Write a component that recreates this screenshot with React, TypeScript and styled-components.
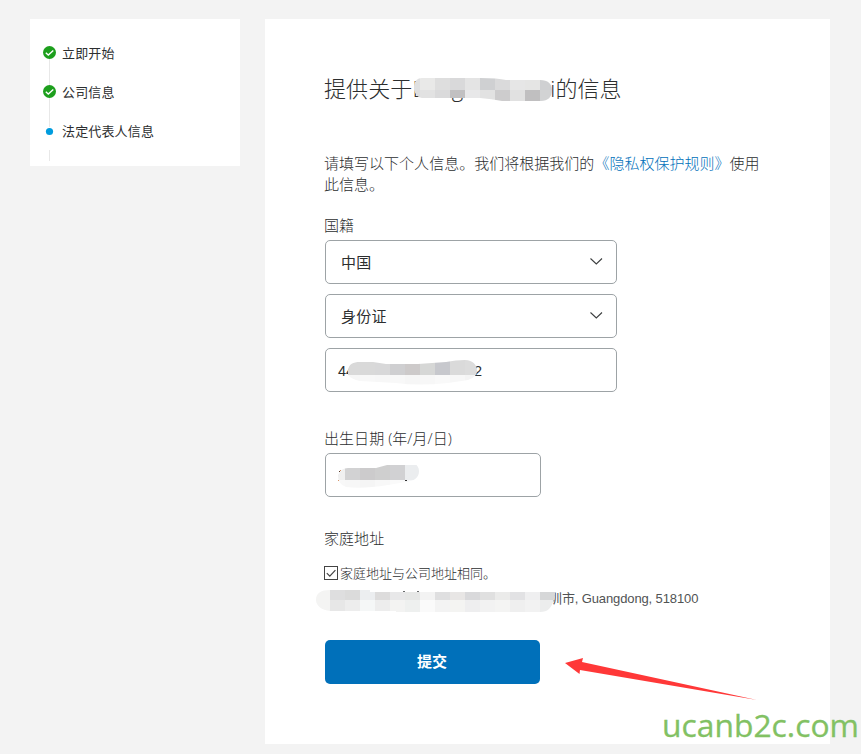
import React from "react";
import styled, { createGlobalStyle } from "styled-components";

const GlobalStyle = createGlobalStyle`
  * { box-sizing: border-box; }
  html, body { margin: 0; padding: 0; }
  body {
    background: #f3f3f3;
    color: #2c2e2f;
    font-family: "Liberation Sans", "Noto Sans CJK SC", sans-serif;
    overflow: hidden;
  }
`;

const Page = styled.div`
  position: relative;
  width: 861px;
  height: 754px;
  padding: 19px 31px 10px 30px;
  display: flex;
  align-items: flex-start;
  gap: 25px;
`;

const Sidebar = styled.nav`
  width: 210px;
  height: 147px;
  flex: none;
  background: #fff;
  padding: 14px 12px 0;
`;

const Step = styled.div`
  display: flex;
  height: 39px;
  gap: 5px;
  font-size: 13px;
  line-height: 41px;
  letter-spacing: 0.15px;
  white-space: nowrap;
`;

const Rail = styled.div`
  width: 15px;
  height: 39px;
  flex: none;
  svg { display: block; overflow: visible; }
`;

const Panel = styled.main`
  width: 565px;
  height: 725px;
  flex: none;
  background: #fff;
  padding: 56px 60px 0;
  display: flex;
  flex-direction: column;
  align-items: flex-start;
`;

const Title = styled.h1`
  margin: 0 0 0 -1px;
  height: 30px;
  display: flex;
  font-family: "Open Sans", "Noto Sans CJK SC", sans-serif;
  font-size: 22px;
  line-height: 27px;
  font-weight: 300;
  letter-spacing: 0.1px;
  white-space: nowrap;
`;

const Hidden = styled.span<{ $w: number }>`
  position: relative;
  display: inline-flex;
  flex: none;
  width: ${(p) => p.$w}px;
`;

const NameTail = styled.span<{ $gap: number }>`
  margin-left: ${(p) => p.$gap}px;
`;

const Smudge = styled.svg<{ $x: number; $y: number }>`
  position: absolute;
  left: ${(p) => p.$x}px;
  top: ${(p) => p.$y}px;
  display: block;
`;

const Intro = styled.p`
  margin: 48px 0 0 -1px;
  width: 445px;
  font-size: 15px;
  line-height: 21px;
  font-weight: 300;
  letter-spacing: 0.02px;
  a { color: #0070ba; text-decoration: none; }
`;

const Label = styled.div<{ $top: number }>`
  margin: ${(p) => p.$top}px 0 0 -1px;
  height: 20px;
  font-family: "Open Sans", "Noto Sans CJK SC", sans-serif;
  font-size: 15px;
  line-height: 18px;
  font-weight: 300;
  letter-spacing: 0.05px;
  white-space: nowrap;
`;

const Field = styled.div<{ $top: number; $w?: number; $pad?: number }>`
  position: relative;
  display: flex;
  align-items: center;
  justify-content: space-between;
  margin-top: ${(p) => p.$top}px;
  width: ${(p) => p.$w ?? 292}px;
  height: 44px;
  padding: 0 13px 0 ${(p) => p.$pad ?? 15}px;
  border: 1px solid #9da3a6;
  border-radius: 5px;
  font-size: 15px;
  line-height: 20px;
  svg { flex: none; }
`;

const Value = styled.span`
  padding-top: 2px;
  letter-spacing: 0.2px;
`;

const Digits = styled.span`
  display: flex;
  width: 144px;
  padding-top: 1px;
  justify-content: space-between;
  font-size: 14.5px;
`;

const CheckRow = styled.label`
  display: flex;
  align-items: center;
  margin: 15px 0 0 -1px;
  height: 20px;
  gap: 2px;
  font-size: 13px;
  line-height: 20px;
  font-weight: 300;
  letter-spacing: 0;
  white-space: nowrap;
  svg { display: block; margin-top: -3px; }
`;

const Address = styled.div`
  display: flex;
  height: 20px;
  margin-top: 5px;
  font-size: 13px;
  line-height: 20px;
  letter-spacing: -0.12px;
  color: #515354;
  white-space: nowrap;
`;

const Submit = styled.button`
  margin: 31px 0 0;
  width: 215px;
  height: 44px;
  border: 0;
  border-radius: 5px;
  background: #0070ba;
  color: #fff;
  font: 700 15px/44px "Liberation Sans", "Noto Sans CJK SC", sans-serif;
  padding: 0 1px 0 0;
`;

const Arrow = styled.svg`
  position: absolute;
  left: 560px;
  top: 650px;
`;

const Watermark = styled.div`
  position: absolute;
  right: 2px;
  bottom: 7px;
  color: #82c163;
  font: 500 31.8px/44px "Open Sans", sans-serif;
  -webkit-text-stroke: 0.3px #82c163;
  white-space: nowrap;
`;

const Done = ({ length }: { length: number }) => (
  <svg width="15" height="39">
    <path d={`M7.5 26v${length}`} stroke="#e8e8e8" />
    <circle cx="7.5" cy="19.5" r="6.5" fill="#1d9f1d" />
    <path d="M3.800 19.800l2.500 2.300 5-4.600" fill="none" stroke="#fff" strokeWidth="1.4" />
  </svg>
);

const Current = () => (
  <svg width="15" height="39">
    <path d="M7.5 39v11" stroke="#e8e8e8" />
    <circle cx="7.5" cy="20.5" r="3.6" fill="#009cde" />
  </svg>
);

const Chevron = () => (
  <svg width="14" height="12" viewBox="0 0 14 12">
    <path d="M1.500 2.500L7.300 8l5.700-5.500" fill="none" stroke="#3c3e3f" strokeWidth="1.1" />
  </svg>
);

type MosaicProps = {
  id: string;
  x: number;
  y: number;
  w: number;
  h: number;
  offset: number;
  split: number;
  shape: string;
  rows: string[][];
  specks?: [number, number, number, number, string][];
};

/* Two rows of 15px tiles clipped to a brush-stroke outline. */
const Mosaic = ({ id, x, y, w, h, offset, split, shape, rows, specks = [] }: MosaicProps) => (
  <Smudge $x={x} $y={y} width={w} height={h}>
    <clipPath id={id}>
      <path d={shape} />
    </clipPath>
    <g clipPath={`url(#${id})`} shapeRendering="crispEdges">
      {rows.map((row, r) =>
        row.map((fill, c) => (
          <rect
            key={`${r}-${c}`}
            x={offset + c * 15}
            y={r === 0 ? split - 15 : split}
            width="15"
            height="15"
            fill={fill}
          />
        ))
      )}
    </g>
    {specks.map(([sx, sy, sw, sh, fill], i) => (
      <rect key={i} x={sx} y={sy} width={sw} height={sh} fill={fill} />
    ))}
  </Smudge>
);

export default function App() {
  return (
    <>
      <GlobalStyle />
      <Page>
        <Sidebar>
          <Step><Rail><Done length={26} /></Rail>立即开始</Step>
          <Step><Rail><Done length={29} /></Rail>公司信息</Step>
          <Step><Rail><Current /></Rail>法定代表人信息</Step>
        </Sidebar>
        <Panel>
          <Title>
            提供关于
            <Hidden $w={143}>
              L
              <NameTail $gap={28}>g</NameTail>
              <NameTail $gap={87}>i</NameTail>
              <Mosaic
                id="name" x={2} y={1} w={140} h={28} offset={-9} split={14}
                shape="M0 10Q1 2 8 2H66Q84 2 92 4H118Q122 4 126 4C134 4 138 8 138 14C138 21 134 25 127 25H88Q78 23 66 22H8Q2 21 0 14Z"
                rows={[
                  ["#dfe0e1", "#e9e9e8", "#dedede", "#d9d9da", "#e4e4e4", "#cfd0d2", "#dadadb", "#e6e6e6", "#e5e5e4", "#cfd0d2"],
                  ["#dddedf", "#e2e2e2", "#dadadb", "#c1c0c1", "#e8e8e9", "#e2e2e2", "#cdcccd", "#e1e1e1", "#c0bfc0", "#d2d3d4"],
                ]}
              />
            </Hidden>
            的信息
          </Title>
          <Intro>
            请填写以下个人信息。我们将根据我们的<a>《隐私权保护规则》</a>使用此信息。
          </Intro>
          <Label $top={21}>国籍</Label>
          <Field $top={4}><Value>中国</Value><Chevron /></Field>
          <Field $top={10}><Value>身份证</Value><Chevron /></Field>
          <Field $top={10} $pad={12}>
            <Digits><span>44</span><span>2</span></Digits>
            <Mosaic
              id="number" x={22} y={10} w={130} h={26} offset={-3} split={16}
              shape="M0 11C1 5 5 3 12 3H25L38 5H70L98 3Q108 1 117 1C125 1 129 6 129 12Q129 18 120 21L100 24Q70 27 48 24L12 22Q3 20 0 16Z"
              rows={[
                ["#d9d9d9", "#d9d9d9", "#d8d8d9", "#cfcfd1", "#cdcaca", "#d6d7d6", "#c7c8cd", "#dadada", "#dcdcdc"],
                ["#f6f6f6", "#f8f8f8", "#f7f7f7", "#f8f8f8", "#f6f6f6", "#f7f7f7", "#f9f9f9", "#f7f7f7", "#f4f4f4"],
              ]}
            />
          </Field>
          <Label $top={37}>出生日期 (年/月/日)</Label>
          <Field $top={4} $w={216} $pad={12}>
            <Mosaic
              id="birth" x={12} y={6} w={82} h={28} offset={-8} split={20}
              shape="M0 15Q3 8 10 8H38L60 2C72 -1 81 4 81 11C81 18 76 21 68 22L50 25Q25 29 8 27Q0 24 0 16Z"
              rows={[
                ["#f0f0f0", "#d2d2d3", "#cccbcc", "#cfcfcf", "#d1d1d3", "#ebedef"],
                ["#f8f8f8", "#f7f7f7", "#f5f5f5", "#f8f8f8", "#fafafa", "#f6f7f8"],
              ]}
              specks={[[1, 11, 1, 1, "#5a3a2a"], [2, 10, 1, 1, "#d9966a"], [0, 20, 1, 1, "#d9966a"], [67, 20, 2, 1, "#333"]]}
            />
          </Field>
          <Label $top={32}>家庭地址</Label>
          <CheckRow>
            <svg width="14" height="14">
              <rect x="0.5" y="0.5" width="13" height="13" fill="#fff" stroke="#444" />
              <path d="M2.800 7.200l3 3 5.600-6" fill="none" stroke="#444" strokeWidth="1.2" />
            </svg>
            家庭地址与公司地址相同。
          </CheckRow>
          <Address>
            <Hidden $w={224}>
              <Mosaic
                id="street" x={-9} y={-1} w={240} h={26} offset={-1} split={12}
                shape="M0 12C0 5 5 2 14 2H54V4H239Q239 10 237 14C235 20 232 24 224 24H80V23H14C6 22 0 18 0 12Z"
                rows={[
                  ["#f4f4f3", "#dededf", "#dbdbdb", "#eceef0", "#dddcdc", "#e8e8e9", "#e6e7e6", "#f3f3f3", "#dfdfe0", "#e8e6e5", "#d9d9db", "#e0e0e0", "#ebebea", "#e2e2e4", "#efeff0", "#d6d7d8"],
                  ["#f4f4f3", "#e7e7e7", "#ededed", "#f5f7f7", "#ededed", "#f3f3f2", "#eef0ef", "#fafafa", "#f3f3f3", "#f4f4f2", "#eeeeef", "#f2f2f2", "#f4f4f3", "#efefef", "#f2f2f2", "#eceded"],
                ]}
                specks={[[87, 3, 2, 1, "#6a6c6d"], [101, 3, 2, 1, "#6a6c6d"]]}
              />
            </Hidden>
            圳市, Guangdong, 518100
          </Address>
          <Submit>提交</Submit>
        </Panel>
        <Arrow width="200" height="52">
          <path d="M5 13L23 8L22 12L197 50L20 20L19.500 24Z" fill="#ff3838" />
        </Arrow>
        <Watermark>ucanb2c.com</Watermark>
      </Page>
    </>
  );
}
